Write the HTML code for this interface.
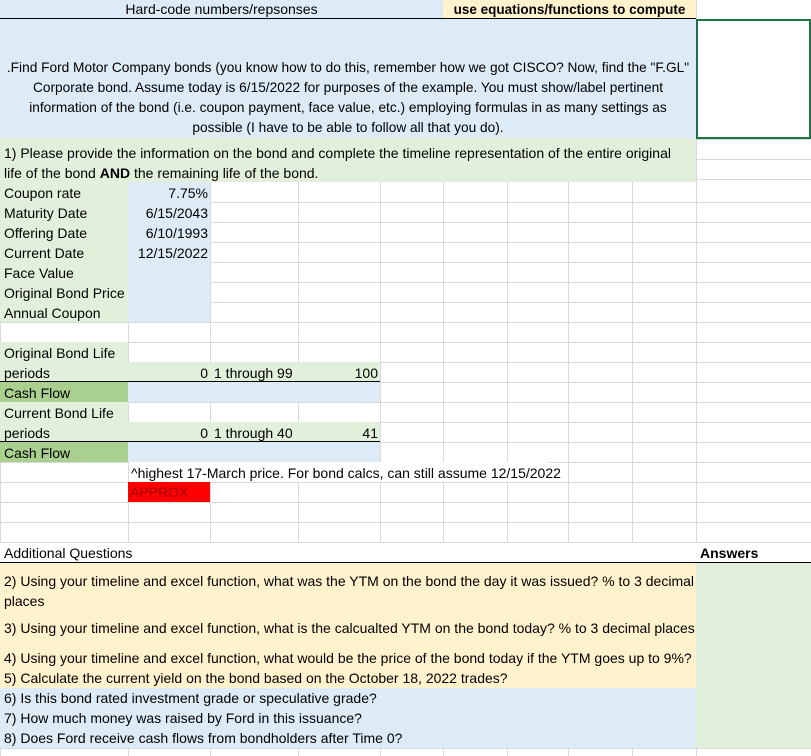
<!DOCTYPE html>
<html><head><meta charset="utf-8">
<style>
*{margin:0;padding:0;box-sizing:border-box}
body{width:811px;height:756px;overflow:hidden;background:#fff;font-family:"Liberation Sans",sans-serif;font-size:14px;color:#000;position:relative}
.a{position:absolute;white-space:nowrap}
.v{position:absolute;top:0;height:756px;width:1px;background:#d9d9d9}
.grid{position:absolute;left:0;width:811px;background:repeating-linear-gradient(to bottom,transparent 0,transparent 19px,#d9d9d9 19px,#d9d9d9 20px)}
.t{position:absolute;white-space:nowrap;line-height:20px}
.r{text-align:right}
</style></head><body>
<div class="v" style="left:0"></div>
<div class="v" style="left:128px"></div><div class="v" style="left:210px"></div><div class="v" style="left:298px"></div><div class="v" style="left:380px"></div><div class="v" style="left:443px"></div><div class="v" style="left:507px"></div><div class="v" style="left:568px"></div><div class="v" style="left:632px"></div><div class="v" style="left:696px"></div>
<div class="grid" style="top:183px;height:380px"></div>
<div class="grid" style="top:0;height:20px"></div>
<div class="grid" style="top:20px;height:120px;left:696px;width:115px"></div>
<div class="grid" style="top:140px;height:43px;left:696px;width:115px"></div>
<div class="a" style="top:748px;left:0;width:811px;height:1px;background:#d9d9d9"></div>

<div class="a" style="left:0;top:0;width:443px;height:19px;background:#ddebf7"></div>
<div class="a" style="left:443px;top:0;width:253px;height:19px;background:#fff2cc"></div>
<div class="a" style="left:0;top:18px;width:696px;height:1px;background:#000"></div>
<div class="t" style="left:0;top:0;width:443px;text-align:center;line-height:19px">Hard-code numbers/repsonses</div>
<div class="t" style="left:443px;top:0;width:253px;text-align:center;line-height:19px;font-weight:bold;font-size:13.5px">use equations/functions to compute</div>

<div class="a" style="left:0;top:19px;width:696px;height:119px;background:#ddebf7"></div>
<div class="a" style="left:696px;top:19px;width:115px;height:120px;border:2px solid #217346;background:#fff"></div>
<div class="a" style="left:0;top:58px;width:696px;text-align:center;line-height:20px;font-size:13.7px">.Find Ford Motor Company bonds (you know how to do this, remember how we got CISCO? Now, find the "F.GL"<br>Corporate bond. Assume today is 6/15/2022 for purposes of the example. You must show/label pertinent<br>information of the bond (i.e. coupon payment, face value, etc.) employing formulas in as many settings as<br>possible (I have to be able to follow all that you do).</div>

<div class="a" style="left:0;top:138px;width:696px;height:44px;background:#e2efda"></div>
<div class="t" style="left:4px;top:143px">1) Please provide the information on the bond and complete the timeline representation of the entire original</div>
<div class="t" style="left:4px;top:163px">life of the bond <b>AND</b> the remaining life of the bond.</div>

<div class="a" style="left:0;top:182px;width:128px;height:140px;background:#e2efda"></div>
<div class="a" style="left:128px;top:182px;width:82px;height:140px;background:#ddebf7"></div>
<div class="t" style="left:4px;top:183px">Coupon rate</div><div class="t r" style="left:128px;width:80px;top:183px">7.75%</div>
<div class="t" style="left:4px;top:203px">Maturity Date</div><div class="t r" style="left:128px;width:80px;top:203px">6/15/2043</div>
<div class="t" style="left:4px;top:223px">Offering Date</div><div class="t r" style="left:128px;width:80px;top:223px">6/10/1993</div>
<div class="t" style="left:4px;top:243px">Current Date</div><div class="t r" style="left:128px;width:80px;top:243px">12/15/2022</div>
<div class="t" style="left:4px;top:263px">Face Value</div>
<div class="t" style="left:4px;top:283px">Original Bond Price</div>
<div class="t" style="left:4px;top:303px">Annual Coupon</div>

<div class="a" style="left:0;top:342px;width:128px;height:20px;background:#e2efda"></div>
<div class="a" style="left:0;top:362px;width:380px;height:20px;background:#e2efda;border-bottom:1px solid #000"></div>
<div class="a" style="left:0;top:382px;width:128px;height:20px;background:#a9d08e"></div>
<div class="a" style="left:128px;top:382px;width:252px;height:20px;background:#ddebf7"></div>
<div class="t" style="left:4px;top:343px">Original Bond Life</div>
<div class="t" style="left:4px;top:363px">periods</div>
<div class="t r" style="left:128px;width:80px;top:363px">0</div>
<div class="t" style="left:214px;top:363px">1 through 99</div>
<div class="t r" style="left:298px;width:80px;top:363px">100</div>
<div class="t" style="left:4px;top:383px">Cash Flow</div>

<div class="a" style="left:0;top:402px;width:128px;height:20px;background:#e2efda"></div>
<div class="a" style="left:0;top:422px;width:380px;height:20px;background:#e2efda;border-bottom:1px solid #000"></div>
<div class="a" style="left:0;top:442px;width:128px;height:20px;background:#a9d08e"></div>
<div class="a" style="left:128px;top:442px;width:252px;height:20px;background:#ddebf7"></div>
<div class="t" style="left:4px;top:403px">Current Bond Life</div>
<div class="t" style="left:4px;top:423px">periods</div>
<div class="t r" style="left:128px;width:80px;top:423px">0</div>
<div class="t" style="left:214px;top:423px">1 through 40</div>
<div class="t r" style="left:298px;width:80px;top:423px">41</div>
<div class="t" style="left:4px;top:443px">Cash Flow</div>

<div class="a" style="left:129px;top:462px;width:420px;height:20px;background:#fff"></div>
<div class="t" style="left:131px;top:463px">^highest 17-March price. For bond calcs, can still assume 12/15/2022</div>
<div class="a" style="left:128px;top:482px;width:82px;height:20px;background:#ff0000"></div>
<div class="t" style="left:130px;top:482px;color:#a00000">APPROX</div>

<div class="a" style="left:0;top:543px;width:811px;height:20px;background:#fff"></div>
<div class="a" style="left:0;top:562px;width:811px;height:1px;background:#000"></div>
<div class="t" style="left:4px;top:543px">Additional Questions</div>
<div class="t" style="left:700px;top:543px;font-weight:bold">Answers</div>
<div class="a" style="left:0;top:563px;width:696px;height:125px;background:#fff2cc"></div>
<div class="a" style="left:0;top:688px;width:696px;height:60px;background:#ddebf7"></div>
<div class="a" style="left:696px;top:563px;width:115px;height:185px;background:#e2efda"></div>
<div class="t" style="left:4px;top:571px">2) Using your timeline and excel function, what was the YTM on the bond the day it was issued? % to 3 decimal</div>
<div class="t" style="left:4px;top:591px">places</div>
<div class="t" style="left:4px;top:618px">3) Using your timeline and excel function, what is the calcualted YTM on the bond today? % to 3 decimal places</div>
<div class="t" style="left:4px;top:648px">4) Using your timeline and excel function, what would be the price of the bond today if the YTM goes up to 9%?</div>
<div class="t" style="left:4px;top:668px">5) Calculate the current yield on the bond based on the October 18, 2022 trades?</div>
<div class="t" style="left:4px;top:688px">6) Is this bond rated investment grade or speculative grade?</div>
<div class="t" style="left:4px;top:708px">7) How much money was raised by Ford in this issuance?</div>
<div class="t" style="left:4px;top:728px">8) Does Ford receive cash flows from bondholders after Time 0?</div>
</body></html>
